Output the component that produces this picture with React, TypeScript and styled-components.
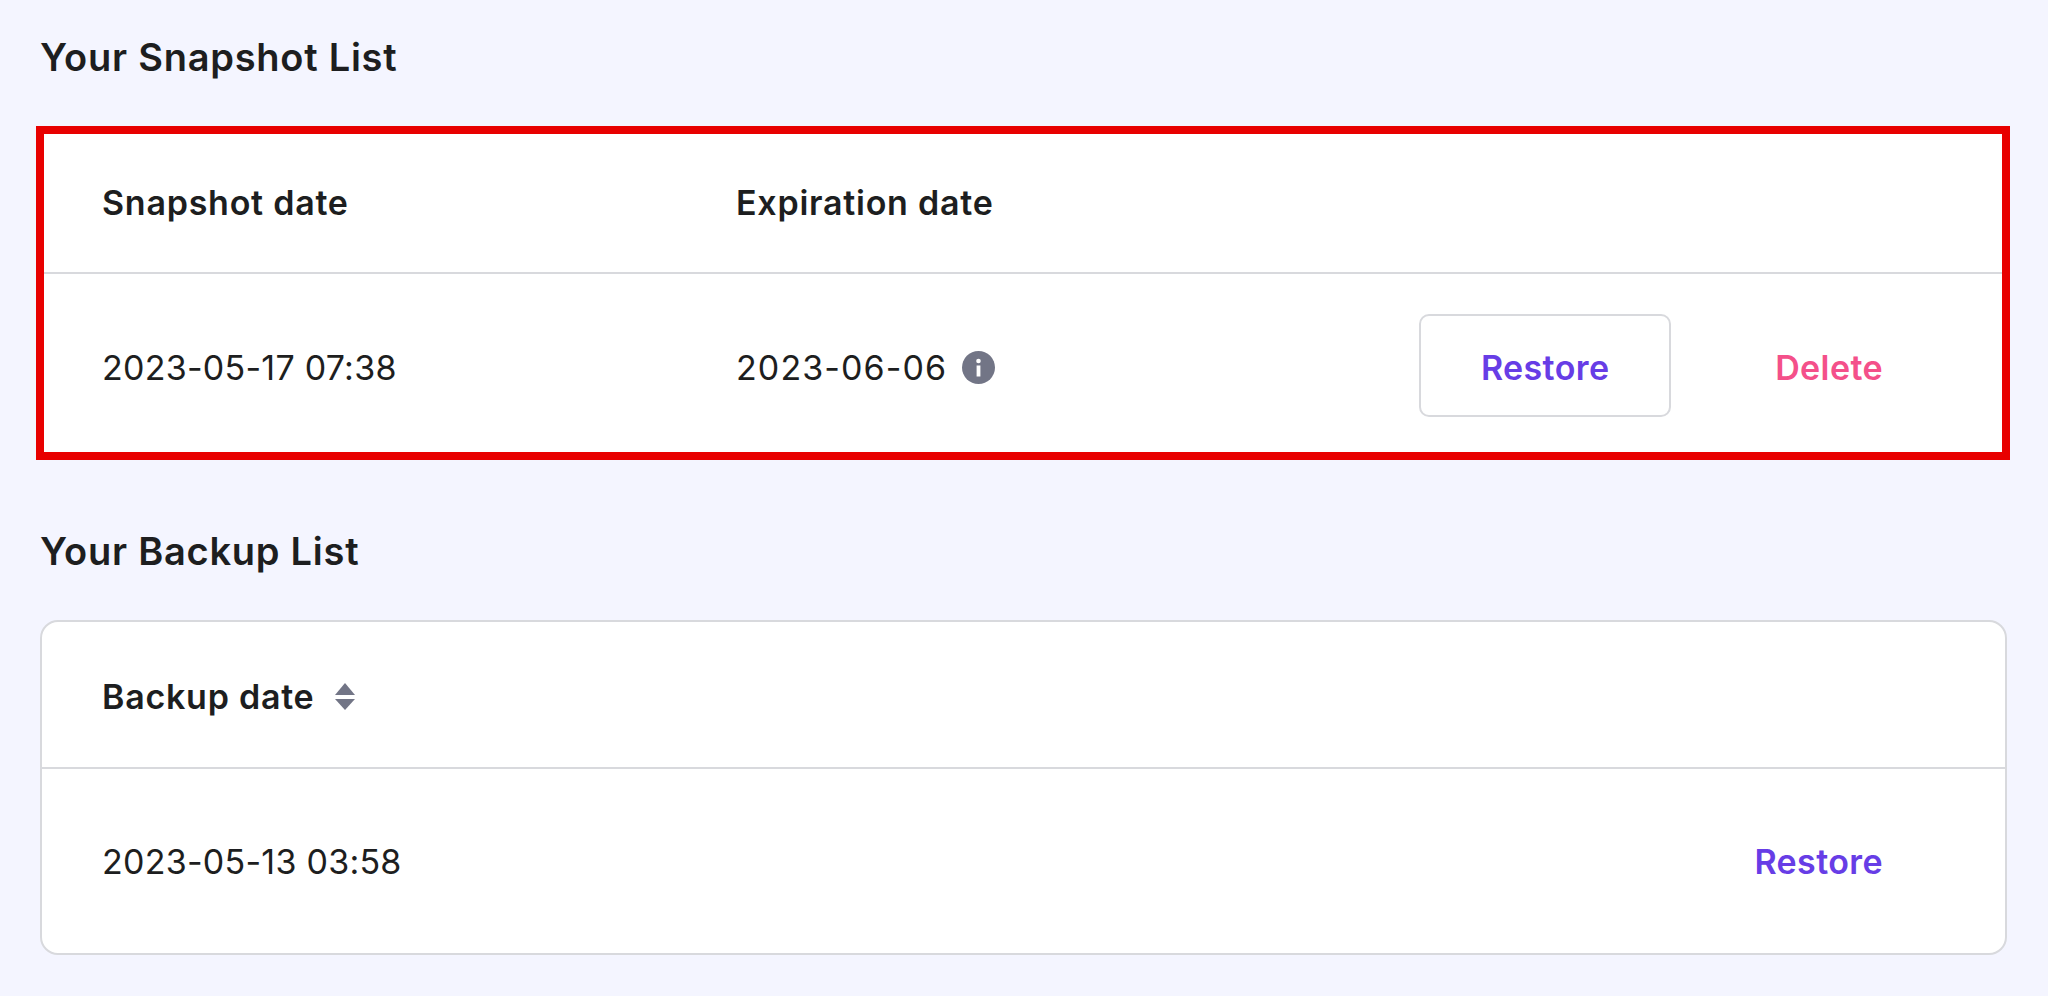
import React from 'react';
import styled, { createGlobalStyle } from 'styled-components';

const GlobalStyle = createGlobalStyle`
  html, body {
    margin: 0;
    padding: 0;
    background: #f4f5ff;
  }
  body {
    font-family: Inter, "Liberation Sans", sans-serif;
    color: #1d1e20;
  }
`;

const Page = styled.main`
  box-sizing: border-box;
  width: 2048px;
  height: 996px;
  overflow: hidden;
  padding: 29px 41px 0 40px;
`;

const SectionTitle = styled.h2`
  margin: 0 0 41px 0;
  height: 56px;
  font-size: 38px;
  line-height: 57px;
  font-weight: 600;
  letter-spacing: 0.75px;
`;

const SnapshotCard = styled.section`
  box-sizing: border-box;
  height: 334px;
  margin: 0 -3px 63px -4px;
  background: #fff;
  border: 8px solid #e80000;
`;

const BackupCard = styled.section`
  box-sizing: border-box;
  height: 335px;
  background: #fff;
  border: 2px solid #d8d9dd;
  border-radius: 18px;
`;

const HeaderRow = styled.div<{ $height: number; $left: number; $top?: number }>`
  box-sizing: border-box;
  display: flex;
  align-items: center;
  height: ${props => props.$height}px;
  padding: ${props => props.$top ?? 0}px 58px 0 ${props => props.$left}px;
  border-bottom: 2px solid #d8d9dd;
`;

const BodyRow = styled.div<{ $height: number; $left: number; $right: number; $top: number; $bottom?: number }>`
  box-sizing: border-box;
  display: flex;
  align-items: center;
  height: ${props => props.$height}px;
  padding: ${props => props.$top}px ${props => props.$right}px ${props => props.$bottom ?? 0}px ${props => props.$left}px;
`;

const Column = styled.div`
  width: 634px;
  flex: none;
  display: flex;
  align-items: center;
`;

const HeadText = styled.span`
  font-size: 34px;
  line-height: 44px;
  font-weight: 600;
  letter-spacing: 0.75px;
`;

const CellText = styled.span<{ $tracking?: number }>`
  display: block;
  padding-top: 5px;
  font-size: 34px;
  line-height: 44px;
  font-weight: 400;
  letter-spacing: ${props => props.$tracking ?? 0.25}px;
`;

const Actions = styled.div`
  margin-left: auto;
  display: flex;
  align-items: center;
  gap: 104px;
`;

const TextButton = styled.button<{ $danger?: boolean }>`
  padding: 4px 0 0 0;
  border: none;
  background: none;
  font-family: inherit;
  font-size: 34px;
  line-height: 44px;
  font-weight: 600;
  letter-spacing: 0.4px;
  color: ${props => (props.$danger ? '#f4508a' : '#673de6')};
`;

const OutlineButton = styled(TextButton)`
  box-sizing: border-box;
  width: 252px;
  height: 103px;
  border: 2px solid #d8d9dd;
  border-radius: 10px;
`;

const InfoIcon = styled.svg`
  width: 33px;
  height: 33px;
  margin-left: 15px;
  margin-top: 3px;
  flex: none;
`;

const SortIcon = styled.svg`
  width: 22px;
  height: 27px;
  margin-left: 20px;
  flex: none;
`;

const Info = () => (
  <InfoIcon viewBox="0 0 33 33">
    <circle cx="16.5" cy="16.5" r="16.5" fill="#727586" />
    <circle cx="16.5" cy="10" r="2.3" fill="#fff" />
    <rect x="14.6" y="14.5" width="3.8" height="11" fill="#fff" />
  </InfoIcon>
);

const Sort = () => (
  <SortIcon viewBox="0 0 22 27">
    <path d="M11 0 L21 12 H1 Z" fill="#727586" />
    <path d="M1 16 H21 L11 27 Z" fill="#727586" />
  </SortIcon>
);

const App: React.FC = () => {
  return (
    <>
      <GlobalStyle />
      <Page>
        <SectionTitle>Your Snapshot List</SectionTitle>
        <SnapshotCard>
          <HeaderRow $height={140} $left={58}>
            <Column>
              <HeadText>Snapshot date</HeadText>
            </Column>
            <Column>
              <HeadText>Expiration date</HeadText>
            </Column>
          </HeaderRow>
          <BodyRow $height={178} $left={58} $right={119} $top={5}>
            <Column>
              <CellText>2023-05-17 07:38</CellText>
            </Column>
            <Column>
              <CellText $tracking={1.1}>2023-06-06</CellText>
              <Info />
            </Column>
            <Actions>
              <OutlineButton>Restore</OutlineButton>
              <TextButton $danger>Delete</TextButton>
            </Actions>
          </BodyRow>
        </SnapshotCard>
        <SectionTitle>Your Backup List</SectionTitle>
        <BackupCard>
          <HeaderRow $height={147} $left={60} $top={4}>
            <HeadText>Backup date</HeadText>
            <Sort />
          </HeaderRow>
          <BodyRow $height={184} $left={60} $right={122} $top={0} $bottom={3}>
            <CellText>2023-05-13 03:58</CellText>
            <Actions>
              <TextButton>Restore</TextButton>
            </Actions>
          </BodyRow>
        </BackupCard>
      </Page>
    </>
  );
};

export default App;
